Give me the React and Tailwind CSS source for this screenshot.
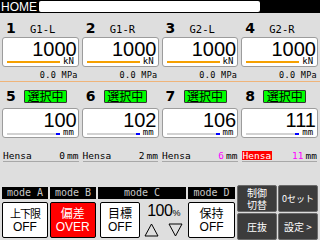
const TOP = [
  { n: '1', name: 'G1-L', value: '1000' },
  { n: '2', name: 'G1-R', value: '1000' },
  { n: '3', name: 'G2-L', value: '1000' },
  { n: '4', name: 'G2-R', value: '1000' },
]

const BOTTOM = [
  { n: '5', value: '100' },
  { n: '6', value: '102' },
  { n: '7', value: '106' },
  { n: '8', value: '111' },
]

const HENSA = [
  { v: '0', alert: false },
  { v: '2', alert: false },
  { v: '6', alert: false, pink: true },
  { v: '11', alert: true, pink: true },
]

const mono = "font-['DejaVu_Sans_Mono',monospace]"

function Panel({ value, unit, bar }) {
  return (
    <div className="h-[30px] bg-white border border-[#9c9c9c] rounded-[3px] flex flex-col">
      <div className="text-right pr-[1px] pt-[3px] text-[20px] leading-[16px] text-black font-['Liberation_Sans',sans-serif]">
        {value}
      </div>
      <div className="flex items-end flex-1 pb-[1px]">
        {bar}
        <span className={`${mono} text-[9px] leading-[9px] text-black ml-[3px]`}>{unit}</span>
      </div>
    </div>
  )
}

function ModeButton({ top, bottom, className = '', red = false, topClass = 'text-[12px]' }) {
  return (
    <div
      className={`${className} border border-black rounded-[2px] flex flex-col items-center justify-center ${
        red ? 'bg-[#ff0000] text-white' : 'bg-white text-black'
      }`}
    >
      <span className={`${topClass} leading-[14px]`}>{top}</span>
      <span className="text-[12px] leading-[13px]">{bottom}</span>
    </div>
  )
}

export default function App() {
  return (
    <div className="w-[320px] h-[240px] bg-[#dedede] overflow-hidden flex flex-col font-['Liberation_Sans','Noto_Sans_CJK_JP',sans-serif]">
      {/* title bar */}
      <div className="h-[13px] bg-black flex items-center shrink-0">
        <span className="text-white text-[12px] leading-none w-[39px] pl-[1px]">HOME</span>
        <div className="w-[221px] h-[11px] bg-white rounded-[2px]" />
      </div>

      {/* load cells */}
      <div className="grid grid-cols-4 gap-x-[3px] px-[2px] h-[68px] shrink-0">
        {TOP.map((c) => (
          <div key={c.n} className="flex flex-col">
            <div className="h-[24px] flex items-baseline pt-[8px]">
              <span className="w-[28px] pl-[4px] text-[14px] leading-none font-bold font-['DejaVu_Sans',sans-serif]">{c.n}</span>
              <span className={`${mono} text-[10.5px] leading-none`}>{c.name}</span>
            </div>
            <Panel
              value={c.value}
              unit="kN"
              bar={<div className="ml-[4px] mb-[3px] w-[53px] h-[2px] bg-[#f5a000]" />}
            />
            <div className={`${mono} text-[8.5px] leading-none text-right pt-[4px] pr-[1px] tracking-[0.3px]`}>0.0 MPa</div>
          </div>
        ))}
      </div>
      <div className="h-px bg-[#efb47a] shrink-0" />

      {/* strokes */}
      <div className="grid grid-cols-4 gap-x-[3px] px-[2px] shrink-0">
        {BOTTOM.map((c) => (
          <div key={c.n} className="flex flex-col">
            <div className="h-[26px] flex items-center pt-[2px]">
              <span className="w-[22px] pl-[4px] text-[14px] leading-none font-bold font-['DejaVu_Sans',sans-serif]">{c.n}</span>
              <span className="h-[13px] w-[43px] bg-[#00ff00] border border-[#333] rounded-[1px] flex items-center justify-center text-[12px] leading-none font-['Noto_Sans_CJK_JP',sans-serif]">
                選択中
              </span>
            </div>
            <Panel
              value={c.value}
              unit="mm"
              bar={
                <div className="ml-[4px] mb-[2px] flex">
                  <div className="w-[49px] h-[2px] bg-[#d2d2d2]" />
                  <div className="w-[4px] h-[2px] bg-[#0000ff]" />
                </div>
              }
            />
          </div>
        ))}
      </div>

      {/* hensa */}
      <div className="grid grid-cols-4 gap-x-[4px] px-[3px] pt-[11px] shrink-0">
        {HENSA.map((h, i) => (
          <div key={i} className={`${mono} flex items-end border-b border-[#a8a8a8] h-[13px] pb-[1px] text-[9.5px] leading-none`}>
            <span className={h.alert ? 'bg-[#ff0000] text-white px-[1px]' : 'text-black'}>Hensa</span>
            <span className={`ml-auto ${h.pink ? 'text-[#ff00ff]' : 'text-black'}`}>{h.v}</span>
            <span className="ml-[2px]">mm</span>
          </div>
        ))}
      </div>

      {/* controls */}
      <div className="mt-auto h-[55px] flex px-[2px] gap-x-[2px] shrink-0">
        <div className="w-[233px] flex flex-col pt-[2px]">
          <div className={`${mono} h-[12px] flex gap-x-[2px] text-[10px] leading-none text-[#c8c8c8]`}>
            <div className="w-[46px] bg-black flex items-center justify-center">mode A</div>
            <div className="w-[46px] bg-black flex items-center justify-center">mode B</div>
            <div className="w-[88px] bg-black flex items-center justify-center">mode C</div>
            <div className="w-[47px] bg-black flex items-center justify-center">mode D</div>
          </div>
          <div className="flex-1 flex gap-x-[2px] pt-[3px] pb-[2px] items-stretch">
            <ModeButton className="w-[46px]" top="上下限" bottom="OFF" topClass="text-[11px] tracking-[-1px]" />
            <ModeButton className="w-[46px]" top="偏差" bottom="OVER" red />
            <ModeButton className="ml-[2px] w-[41px]" top="目標" bottom="OFF" />
            <div className="w-[43px] flex flex-col items-center">
              <div className="flex items-baseline leading-none pt-[1px]">
                <span className="text-[16px] tracking-[-0.5px]">100</span>
                <span className="text-[9px]">%</span>
              </div>
              <div className="flex gap-x-[9px] pt-[4px]">
                <svg width="15" height="14" viewBox="0 0 15 14">
                  <path d="M7.5 1 L14 13 L1 13 Z" fill="none" stroke="#000" strokeWidth="1" />
                </svg>
                <svg width="15" height="14" viewBox="0 0 15 14">
                  <path d="M1 1 L14 1 L7.5 13 Z" fill="none" stroke="#000" strokeWidth="1" />
                </svg>
              </div>
            </div>
            <ModeButton className="ml-[1px] w-[47px]" top="保持" bottom="OFF" />
          </div>
        </div>
        <div className="flex-1 grid grid-cols-2 grid-rows-2 gap-[1px] text-white text-[10px] font-['Noto_Sans_CJK_JP',sans-serif]">
          <div className="bg-[#3c3c3c] rounded-[2px] border border-[#6a6a6a] flex flex-col items-center justify-center leading-[12px]">
            <span>制御</span>
            <span>切替</span>
          </div>
          <div className="bg-[#3c3c3c] rounded-[2px] border border-[#6a6a6a] flex items-center justify-center text-[9px] leading-none">0セット</div>
          <div className="bg-[#3c3c3c] rounded-[2px] border border-[#6a6a6a] flex items-center justify-center leading-none">圧抜</div>
          <div className="bg-[#3c3c3c] rounded-[2px] border border-[#6a6a6a] flex items-center justify-center leading-none">設定 &gt;</div>
        </div>
      </div>
    </div>
  )
}
